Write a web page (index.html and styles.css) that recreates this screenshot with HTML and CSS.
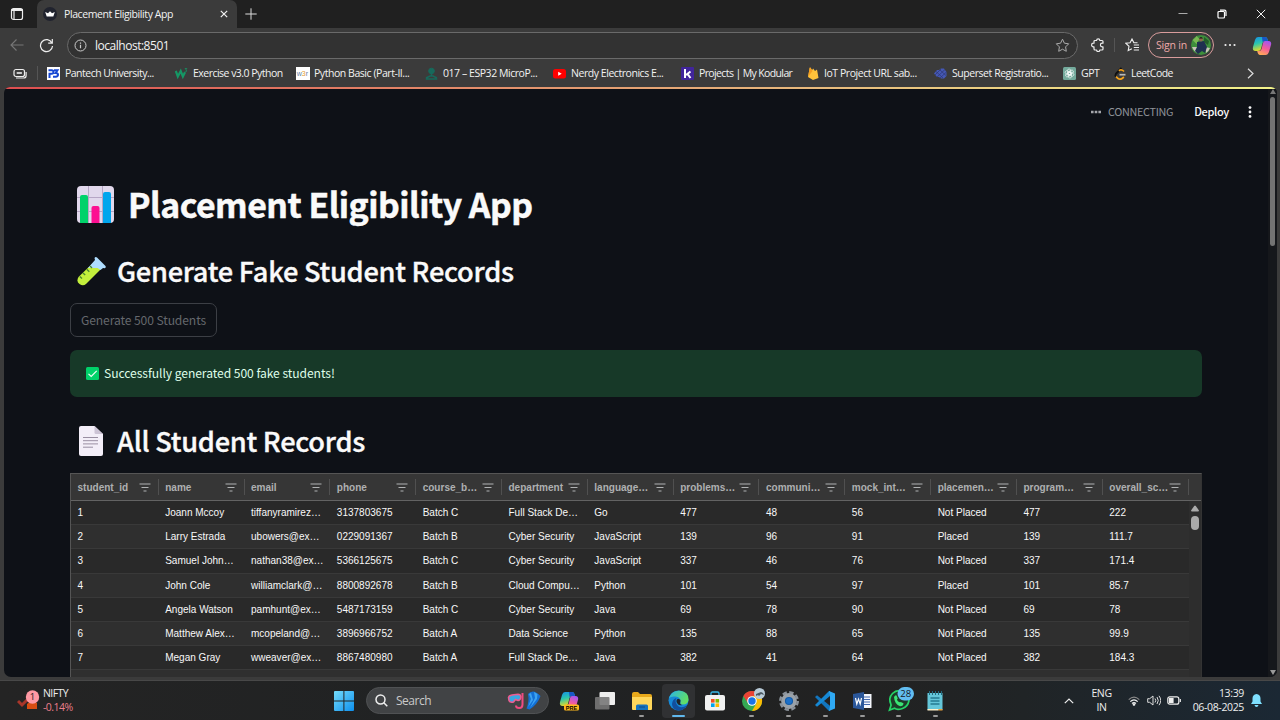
FILE: index.html
```html
<!DOCTYPE html>
<html lang="en">
<head>
<meta charset="utf-8">
<title>Placement Eligibility App</title>
<link rel="stylesheet" href="styles.css">
</head>
<body>
<div class="browser">
  <div class="tabstrip">
    <svg class="tab-actions" width="14" height="14" viewBox="0 0 14 14" fill="none" stroke="#eee" stroke-width="1.2"><rect x="1.5" y="1.5" width="11" height="11" rx="2"/><path d="M1.5 3h11" stroke-width="2"/><path d="M4 3v9"/></svg>
    <div class="tab">
      <svg width="14" height="14" viewBox="0 0 14 14"><circle cx="7" cy="7" r="7" fill="#20232e"/><path d="M2.200 5 5 6.300 7 4.200 9 6.300 11.800 5 10.300 9.500H3.700z" fill="#fff"/></svg>
      <span class="tab-title">Placement Eligibility App</span>
      <svg class="tab-close" width="8" height="8" viewBox="0 0 8 8" stroke="#f2f2f2" stroke-width="1.200"><path d="M.8.8l6.400 6.400M7.200.8.8 7.200"/></svg>
    </div>
    <svg class="new-tab" width="12" height="12" viewBox="0 0 12 12" stroke="#ddd"><path d="M6 .3v11.400M.3 6h11.400"/></svg>
    <div class="window-buttons">
      <svg width="10" height="10" viewBox="0 0 10 10" stroke="#aaa"><path d="M.5 4.500h9"/></svg>
      <svg width="10" height="10" viewBox="0 0 10 10" fill="none" stroke="#fff" stroke-width="1.200"><rect x="1" y="2.500" width="6.500" height="6.500" rx="1"/><path d="M3 1.200h4.500Q9 1.200 9 2.800V7"/></svg>
      <svg width="10" height="10" viewBox="0 0 10 10" stroke="#f2f2f2"><path d="M.8.8l8.400 8.400M9.200.8.8 9.200"/></svg>
    </div>
  </div>
  <div class="toolbar">
    <svg width="14" height="14" viewBox="0 0 14 14" fill="none" stroke="#777" stroke-width="1.100"><path d="M13.500 7H1M6.500 1.500 1 7l5.500 5.500"/></svg>
    <svg class="reload" width="15" height="15" viewBox="0 0 15 15" fill="none" stroke="#eee" stroke-width="1.200"><path d="M12.900 5A6 6 0 1 0 13.500 8M13.300 1v4.200H9.200"/></svg>
    <div class="address">
      <svg width="13" height="13" viewBox="0 0 13 13" fill="none" stroke="#ccc"><circle cx="6.500" cy="6.500" r="5.500"/><path d="M6.500 5.800v3.400M6.500 3.600v1.200" stroke-width="1.200"/></svg>
      <span class="url">localhost:8501</span>
      <svg width="15" height="15" viewBox="0 0 15 15" fill="none" stroke="#aaa"><path d="m7.500 1.200 1.900 4 4.300.6-3.100 3.100.7 4.400-3.800-2.100-3.800 2.100.7-4.400L1.300 5.800l4.300-.6z"/></svg>
    </div>
    <svg class="extensions" width="14" height="14" viewBox="0 0 14 14" fill="none" stroke="#eee" stroke-width="1.200" stroke-linejoin="round"><path d="M4 2.500h1.600a1.600 1.600 0 0 1 3.200 0H11q1 0 1 1v1.700h-.8a1.800 1.800 0 0 0 0 3.600h.8v2.200q0 1-1 1H8.800a1.600 1.600 0 0 1-3.200 0H4q-1 0-1-1V8.800h-.6a1.800 1.800 0 0 1 0-3.600H3V3.500q0-1 1-1z"/></svg>
    <span class="bar-divider"></span>
    <svg class="favorites" width="15" height="14" viewBox="0 0 15 14" fill="none" stroke="#eee" stroke-width="1.100"><path d="M12.500 4.800 8.800 4.600 7 1 5.100 4.700l-4.200.6L4 8.300l-.8 4.300 3.700-1.900M8.800 7H14M8.800 9.500H14M8.800 12H14"/></svg>
    <div class="signin"><span>Sign in</span>
      <svg width="20" height="20" viewBox="0 0 20 20"><circle cx="10" cy="10" r="10" fill="#3d8f3b"/><path d="M1.500 5q3-2 4-4l3 3-3 5z" fill="#79b853"/><path d="m13 2 5 4-1 4-4-3z" fill="#245c2a"/><path d="M1 12h5l1 6q-4-1-6-6M14 12l5 1q-1 3-4 5z" fill="#c8c5b6"/><path d="m6 7 7-1 3 6-2 6-3-2-4 3-3-3 2-4z" fill="#20304f"/><circle cx="10" cy="4.500" r="2" fill="#8f684d"/><path d="M8 3.500q2-3 4 0z" fill="#161616"/></svg>
    </div>
    <svg class="more" width="12" height="4" viewBox="0 0 12 4" fill="#eee"><circle cx="1.500" cy="2" r="1.100"/><circle cx="6" cy="2" r="1.100"/><circle cx="10.500" cy="2" r="1.100"/></svg>
    <svg class="copilot" width="20" height="19" viewBox="0 0 20 19"><use href="#copilot-mark"/></svg>
  </div>
  <div class="bookmarks">
    <svg class="workspace" width="14" height="11" viewBox="0 0 14 11" fill="none" stroke="#eee" stroke-width="1.200"><rect x="1" y="1.500" width="10.500" height="7" rx="2"/><path d="M3.700 5h5.200" stroke-width="1.600"/><path d="M3 10h7.500q2.600 0 2.600-2.600V4"/></svg>
    <span class="bar-divider"></span>
    <div class="bookmark b1"><svg width="13" height="13" viewBox="0 0 13 13"><path fill="#fff" d="M0 0h13v13H0z"/><path d="M1.500 3.200h3.200q1.800 0 1.800 1.800T4.700 6.800H2.500V11M7 3.200h3.500L8.700 6q2.300 0 2.300 1.800T8.700 9.700H6" fill="none" stroke="#1747d3" stroke-width="2"/></svg><span>Pantech University...</span></div>
    <div class="bookmark b2"><svg width="13" height="13" viewBox="0 0 13 13" fill="none" stroke="#159765"><path d="m.8 4 2 5.500L5.700 4l2.200 5.500L10 5.300" stroke-width="2.200"/><path d="M9.800 1.500h2L10.700 3q1.300.2.800 1.400-.7.800-1.700.2" stroke-width=".8"/></svg><span>Exercise v3.0 Python</span></div>
    <div class="bookmark b3"><svg width="14" height="13" viewBox="0 0 14 13"><path fill="#fff" d="M0 0h14v13H0z"/><text class="w3r" x=".8" y="9"><tspan fill="#6383a5">w</tspan><tspan fill="#e59b34">3</tspan><tspan fill="#6383a5">r</tspan></text></svg><span>Python Basic (Part-II...</span></div>
    <div class="bookmark b4"><svg width="13" height="13" viewBox="0 0 13 13" fill="none" stroke="#17695b"><circle cx="6.500" cy="4" r="2.800" fill="#17695b"/><path d="M6.500 6v3M1 11l4-2h3l4 2M.8 12h11.500" stroke-width="1.500"/></svg><span>017 – ESP32 MicroP...</span></div>
    <div class="bookmark b5"><svg width="13" height="13" viewBox="0 0 13 13"><rect y="2" width="13" height="9.500" rx="2.500" fill="#f00"/><path d="m5.200 4.800 3.500 2-3.500 2z" fill="#fff"/></svg><span>Nerdy Electronics E...</span></div>
    <div class="bookmark b6"><svg width="13" height="13" viewBox="0 0 13 13"><rect width="13" height="13" rx="1" fill="#41259b"/><path d="M4 2v9M9.500 4.500 5 8M6.500 6.800 9.500 11" stroke="#fff" stroke-width="2"/></svg><span>Projects | My Kodular</span></div>
    <div class="bookmark b7"><svg width="12" height="13" viewBox="0 0 12 13"><path d="M1 10 2.700.8q.5-.7 1 .1L5 3.300l1.100-1.800L8 4l2-1.500L11.500 11 6 13z" fill="#ffc33b"/><path d="m1 10 1.700-9.200q.5-.7 1 .1L5.500 4z" fill="#f59e22"/></svg><span>IoT Project URL sab...</span></div>
    <div class="bookmark b8"><svg width="13" height="13" viewBox="0 0 13 13"><path d="M0 6.500 3 3h2l2-1.500h3L12.500 5v4L10 11.500H7L5 10H3z" fill="#4558b4"/><path d="m1 8 6-6M3 10l8-7.500M6 11l6.500-6M2 4.500 9 11M6 3l6 5.500" stroke="#2c3770" stroke-width=".7"/></svg><span>Superset Registratio...</span></div>
    <div class="bookmark b9"><svg width="13" height="13" viewBox="0 0 13 13"><rect width="13" height="13" rx="1.500" fill="#74aa9c"/><g fill="none" stroke="#fff" stroke-width=".6"><rect x="4.500" y="2" width="3.200" height="6" rx="1.600"/><rect x="4.500" y="2" width="3.200" height="6" rx="1.600" transform="rotate(60 6.500 6.500)"/><rect x="4.500" y="2" width="3.200" height="6" rx="1.600" transform="rotate(120 6.500 6.500)"/><rect x="4.500" y="2" width="3.200" height="6" rx="1.600" transform="rotate(180 6.500 6.500)"/><rect x="4.500" y="2" width="3.200" height="6" rx="1.600" transform="rotate(240 6.500 6.500)"/><rect x="4.500" y="2" width="3.200" height="6" rx="1.600" transform="rotate(300 6.500 6.500)"/></g></svg><span>GPT</span></div>
    <div class="bookmark b10"><svg width="13" height="13" viewBox="0 0 13 13" fill="none" stroke-width="1.700"><path d="M7.500.8 1.500 7" stroke="#111"/><path d="M9.800 4.300Q7 1.800 5 4L2 7q-1.300 1.500 0 3" stroke="#111"/><path d="m2 9.700 2 1.800q2.500 1.500 4.700-.5l1.200-1M5 4l1-1q2-.8 4 1.500" stroke="#f6a31a"/><path d="M5.500 7.700h6" stroke="#bbb"/></svg><span>LeetCode</span></div>
    <svg class="overflow" width="7" height="11" viewBox="0 0 7 11" fill="none" stroke="#ddd" stroke-width="1.200"><path d="m1 .8 5 4.700-5 4.700"/></svg>
  </div>

  <div class="page">
    <div class="decoration"></div>
    <header class="app-header">
      <svg width="10" height="4" viewBox="0 0 10 4" fill="#a5a7ac"><path d="M0 .8h2.600v2.500H0zM3.700.8h2.600v2.500H3.700zM7.400.8H10v2.500H7.400z"/></svg>
      <span class="connecting">CONNECTING</span><span class="deploy">Deploy</span>
      <svg width="4" height="12" viewBox="0 0 4 12" fill="#fafafa"><circle cx="2" cy="1.600" r="1.400"/><circle cx="2" cy="6" r="1.400"/><circle cx="2" cy="10.400" r="1.400"/></svg>
    </header>
    <main>
      <h1><svg width="37" height="37" viewBox="0 0 37 37"><rect width="37" height="37" rx="4" fill="#e1d8ec"/><path d="M11.500 0v37M25.500 0v37M0 11.500h37M0 25.500h37" stroke="#b6a6c5"/><path d="M3 11q0-2 2-2h4q2 0 2 2v26H3z" fill="#00d26a"/><path d="M14.500 22q0-2 2-2h4q2 0 2 2v15h-8z" fill="#fc0f91"/><path d="M26 8q0-2 2-2h4q2 0 2 2v29h-8z" fill="#00a6ed"/></svg><span>Placement Eligibility App</span></h1>
      <h2 class="generate"><svg width="29" height="29" viewBox="0 0 29 29"><path d="m19 3 7 7L9 27q-3 2.500-6.500 0t-1-7z" fill="#c3ef3c"/><path d="m11 11 7-8-.5-2q1-1.500 2.500-.5l8.500 8.500q.8 1.500-.8 2.200L26 11l-2.500 2-3-2z" fill="#aeddff"/><path d="m13 9 2 2M9.800 12.300l2.500 2.400M6 16l2.200 2M2.800 19.500 5 21.500" stroke="#48872d" stroke-width="1.400"/></svg><span>Generate Fake Student Records</span></h2>
      <button class="generate-button" disabled>Generate 500 Students</button>
      <div class="alert"><svg width="13" height="13" viewBox="0 0 13 13"><rect width="13" height="13" rx="1.500" fill="#00d26a"/><path d="m2.500 6.800 2.700 2.700 5.500-5.700" fill="none" stroke="#eefff5" stroke-width="1.200"/></svg><span>Successfully generated 500 fake students!</span></div>
      <h2 class="records"><svg width="24" height="30" viewBox="0 0 24 30"><path d="M2 0h13.500L24 8v20q0 2-2 2H2q-2 0-2-2V2Q0 0 2 0z" fill="#f3eef8"/><path d="M15.500 0 24 8h-7q-1.500 0-1.500-1.500z" fill="#cdc4d6"/><path d="M4 11.500h15M4 14.700h15M4 17.900h15M4 21.200h10" stroke="#998ea2"/></svg><span>All Student Records</span></h2>
      <div class="grid">
        <div class="grid-head" id="grid-head"></div>
        <div class="grid-view"><div class="grid-body" id="grid-body"></div>
          <div class="grid-scroll"><svg width="8" height="7" viewBox="0 0 8 7"><path d="M3.200 1q.8-1 1.600 0L8 5.500Q8 6.500 7 6.500H1Q0 6.500 0 5.500z" fill="#aaa"/></svg><i></i></div></div>
      </div>
    </main>
    <div class="page-scroll"><svg width="6" height="5" viewBox="0 0 6 5"><path d="m0 5 3-5 3 5z" fill="#777"/></svg><i></i><svg class="down" width="6" height="5" viewBox="0 0 6 5"><path d="m0 0 3 5 3-5z" fill="#999"/></svg></div>
  </div>
</div>

<footer class="taskbar">
  <div class="widget">
    <svg width="24" height="21" viewBox="0 0 24 21"><path d="m1 11 4 4 5-5" fill="none" stroke="#a9362a" stroke-width="3"/><path d="m10 14 5-4 5 3v6H10z" fill="#d84d12"/><circle cx="15.500" cy="7" r="6.700" fill="#ff99a4"/><text class="badge-text" x="15.500" y="10.400">1</text></svg>
    <div class="ticker"><span>NIFTY</span><span class="loss">-0.14%</span></div>
  </div>
  <svg class="start" width="20" height="20" viewBox="0 0 20 20"><defs><linearGradient id="win" x2="1" y2="1"><stop stop-color="#75dcfb"/><stop offset="1" stop-color="#0d8fed"/></linearGradient></defs><path d="M0 1q0-1 1-1h8.400v9.400H0zM10.400 0H19q1 0 1 1v8.400h-9.600zM0 10.400h9.400V20H1q-1 0-1-1zM10.400 10.400H20V19q0 1-1 1h-8.600z" fill="url(#win)"/></svg>
  <div class="search"><svg width="13" height="13" viewBox="0 0 13 13" fill="none" stroke="#eee" stroke-width="1.500"><circle cx="5.500" cy="5.500" r="4.500"/><path d="m8.800 8.800 3.500 3.500"/></svg><span>Search</span>
    <svg class="snorkel" width="35" height="20" viewBox="0 0 35 20"><path d="M1.500 6.500Q2 4.500 5 4l6-.8q2.500 0 3 2.800-.5 3.500-3 3.500L8.500 8.500 6.500 11Q3 12 2 9.500z" fill="#38a8e4" stroke="#ef5c91" stroke-width="1.500"/><path d="M15.500 2v11.500q0 3.500-3.300 3.500Q9 17 9 14.500" fill="none" stroke="#ef4b80" stroke-width="2"/><path d="M21 3q2-2.500 5-2.500T33.500 5q-3 8.500-11 13.500l-3-1q3-7 1.500-14.500" fill="#1370d6"/><path d="m22 3 2 5-3 8 5-7-2-7zM27 1l1 6-5 10 7-9 .5-5z" fill="#3ea3f0"/></svg></div>
  <div class="task"><svg width="20" height="20" viewBox="0 0 20 20"><defs><linearGradient id="cp1" x2=".3" y2="1"><stop stop-color="#158ee8"/><stop offset=".5" stop-color="#2bc5ae"/><stop offset="1" stop-color="#e4da28"/></linearGradient><linearGradient id="cp2" x1=".7" y1="0" x2=".3" y2="1"><stop stop-color="#a456ef"/><stop offset=".5" stop-color="#f45b9a"/><stop offset="1" stop-color="#ffac54"/></linearGradient><g id="copilot-mark"><path d="M6 1h7q2 0 2.500 2l.5 2h-3q-2 0-2.500 2L9 13q-.5 2-3 2H3.500Q.2 15 1 11l2-7q.8-3 3-3z" fill="url(#cp1)"/><path d="M10 1h3q2 0 2.500 2l.6 2H13q-2 0-2.500 1z" fill="#1856c6"/><path d="M13 5h3.500q3.200 0 2.600 3.500l-2 7Q16 19 13.500 19H8q-2 0-2.800-4H7q2 0 2.600-2L11 7q.5-2 2-2z" fill="url(#cp2)"/></g></defs><use href="#copilot-mark"/><rect x="5" y="13.500" width="15" height="6" rx="1.500" fill="#ffb91e"/><text class="pre" x="12.500" y="18.500">PRE</text></svg></div>
  <div class="task"><svg width="20" height="18" viewBox="0 0 20 18"><rect x="4.500" y="0" width="15.500" height="13" rx="1" fill="#eee"/><rect x="0" y="5" width="14.500" height="12.500" rx="1" fill="#777" opacity=".9"/></svg></div>
  <div class="task open"><svg width="20" height="18" viewBox="0 0 20 18"><path d="M0 2q0-2 2-2h4l2 2h10q2 0 2 2v13H0z" fill="#e8a91b"/><path d="M0 5h20v12q0 1-1 1H1q-1 0-1-1z" fill="#ffd75b"/><path d="M4 18v-4q0-1.500 1.500-1.500h9Q16 12.500 16 14v4z" fill="#1673bd"/><path d="M7 15h6" stroke="#0f4c85"/></svg></div>
  <div class="task active"><svg width="21" height="21" viewBox="0 0 21 21"><defs><linearGradient id="e1" y2=".5" x2="1"><stop stop-color="#29b4e9"/><stop offset="1" stop-color="#62df64"/></linearGradient></defs><circle cx="10.500" cy="10.500" r="10" fill="#1689d8"/><path d="M1 8Q4 0 12 .7q9 1 8.500 9-.5 5-6 4.800-3-.3-2-2.500Q13 7 7.500 6.500 3 6 1 8z" fill="url(#e1)"/><path d="M8.500 8Q6 12 10 16q4 3 9-1-3 5.500-8.500 5.500Q4 19.500 4 14 4.500 9 8.500 8z" fill="#124f9e"/><path d="M10 8.700q3.300.5 2.300 3.300-.8 2.500 2.200 3-4 1-5.500-2t1-4.300z" fill="#202529"/></svg></div>
  <div class="task"><svg width="20" height="20" viewBox="0 0 20 20"><path d="M6 5V2.500Q6 1 7.500 1h5Q14 1 14 2.500V5" fill="none" stroke="#37b9e9" stroke-width="1.300"/><rect y="4" width="20" height="15.500" rx="2" fill="#f1f1f1"/><path d="M6 8h3.600v3.600H6z" fill="#f25022"/><path d="M10.500 8h3.600v3.600h-3.600z" fill="#7fba00"/><path d="M6 12.400h3.600V16H6z" fill="#00a4ef"/><path d="M10.500 12.400h3.600V16h-3.600z" fill="#ffb900"/></svg></div>
  <div class="task open"><svg width="26" height="25" viewBox="0 0 26 25"><circle cx="13" cy="13" r="10" fill="#34a853"/><path d="M4.340 8A10 10 0 0 1 21.700 8H13l-4 7z" fill="#ea4335"/><path d="M21.700 8A10 10 0 0 1 13 23l4.300-7.500Q18 11 13 8z" fill="#fbbc04"/><circle cx="13" cy="13" r="4.800" fill="#fff"/><circle cx="13" cy="13" r="3.700" fill="#1a73e8"/><circle cx="20.500" cy="5.500" r="5.500" fill="#b9cbd8"/><path d="m17 6 5-2 2 1 1 2-3-1-2 2-1-1-2 1z" fill="#4b5862"/></svg></div>
  <div class="task open"><svg width="20" height="20" viewBox="0 0 20 20"><circle cx="10" cy="10" r="8.800" fill="none" stroke="#8b929a" stroke-width="2.400" stroke-dasharray="4.400 2.510"/><circle cx="10" cy="10" r="6" fill="#145ca8" stroke="#9aa1a8" stroke-width="3.800"/><circle cx="10" cy="10" r="3" fill="#1c70c9"/></svg></div>
  <div class="task open"><svg width="20" height="20" viewBox="0 0 20 20"><path d="m0 6 2-1.700 13 10.500v5L14 20z" fill="#1275bd"/><path d="m0 14 2 1.700L15 5V0h-1z" fill="#1688d4"/><path d="m14 0 6 2.500v15L14 20l1-5V5z" fill="#2fa9f3"/></svg></div>
  <div class="task open"><svg width="19" height="18" viewBox="0 0 19 18"><path d="M9 2h9.500v14H9z" fill="#f5f7fc"/><path d="M11 5h6M11 7.500h6M11 10h6M11 12.500h6" stroke="#4267ad"/><path d="m0 2 11-2v18L0 16z" fill="#2b579a"/><path d="m2.500 6 1.300 6 1.700-5 1.700 5 1.300-6" fill="none" stroke="#fff" stroke-width="1.200"/></svg></div>
  <div class="task open"><svg class="whatsapp" width="28" height="25" viewBox="0 0 28 25"><path d="m3.500 23 1.600-5Q2 11 6.500 6.500T17 4.500t6 9q-1 6-6.500 8t-8-.3z" fill="#1d3b29" stroke="#25d366" stroke-width="1.700"/><path d="M8 10q2-3 3-.5l.7 2q-1.500 1 0 2.500 2 2 3 1l2.800 1.200q0 3-3.300 3Q8.500 17.500 8 10z" fill="#3be475"/><rect x="11.500" y="0" width="16.500" height="13.500" rx="6.750" fill="#62bdf1"/><text class="badge-text" x="19.700" y="10.200">28</text></svg></div>
  <div class="task open"><svg width="16" height="20" viewBox="0 0 16 20"><path d="M.5 2h15v17H.5z" fill="#64c6d9"/><path d="M2.500 0v4M5.500 0v4M8.500 0v4M11.500 0v4M14.500 0v4" stroke="#226b80"/><path d="M3.500 7h9M3.500 10h9M3.500 13h9" stroke="#247b91" stroke-width="1.300"/><path d="M.5 18h11v1.500H.5z" fill="#fff0c8"/><path d="M11.500 18h4v1.500h-4z" fill="#e9a13d"/></svg></div>
  <div class="tray">
    <svg class="caret" width="10" height="6" viewBox="0 0 10 6" fill="none" stroke="#eee" stroke-width="1.200"><path d="m.8 5.200 4.200-4.200 4.200 4.200"/></svg>
    <div class="lang"><span>ENG</span><span>IN</span></div>
    <svg class="wifi" width="12" height="10" viewBox="0 0 12 10" fill="none" stroke="#eee" stroke-width="1.100"><path d="M.7 3.700Q6-1.500 11.300 3.700" stroke="#888"/><path d="M2.300 5.700Q6 2 9.700 5.700M4 7.500Q6 5.700 8 7.500"/><circle cx="6" cy="8.500" r=".8" fill="#eee"/></svg>
    <svg class="sound" width="14" height="11" viewBox="0 0 14 11" fill="none" stroke="#ddd"><path d="M.7 3.700h2L6 1v9L2.700 7.300h-2zM8 3.500q1.500 2 0 4M10 2q2.500 3.500 0 7M12 .8q3.500 4.700 0 9.400"/></svg>
    <svg class="battery" width="14" height="9" viewBox="0 0 14 9" fill="none" stroke="#eee" stroke-width="1.200"><rect x=".8" y=".8" width="11" height="7.400" rx="2"/><path d="M2.500 2.500H6v4H2.500z" fill="#eee"/><path d="M13.300 3v3"/></svg>
    <div class="clock"><span>13:39</span><span>06-08-2025</span></div>
    <svg class="bell" width="11" height="13" viewBox="0 0 11 13" fill="#7fe0ff"><path d="M5.500 0Q9.500.5 9.500 4.500v3L11 10H0l1.500-2.500v-3Q1.500.5 5.500 0zM3.500 11h4q-.5 2-2 2t-2-2z"/></svg>
  </div>
</footer>
<script src="grid.js"></script>
</body>
</html>
```

FILE: styles.css
```css
* { box-sizing: border-box; }
body { margin: 0; width: 1280px; height: 720px; overflow: hidden; display: flex; flex-direction: column; background: #3b3b3b; color: #f2f2f2; font-family: "Open Sans", "Noto Sans", sans-serif; font-size: 10.5px; }
svg { flex: none; display: block; }
span { white-space: nowrap; }
.browser { height: 681px; display: flex; flex-direction: column; background: #3b3b3b; border-bottom: 1px solid #484848; }

.tabstrip { height: 28px; flex: none; display: flex; align-items: center; background: #202020; }
.tab-actions { margin: 0 20px 0 10px; }
.tab { align-self: stretch; width: 200px; margin-left: -7px; display: flex; align-items: center; background: #3b3b3b; border-radius: 7px 7px 0 0; padding: 0 9px 0 6px; }
.tab-title { margin-left: 7px; letter-spacing: -.41px; }
.tab-close { margin-left: auto; }
.new-tab { margin-left: 8px; }
.window-buttons { margin-left: auto; margin-right: 14px; display: flex; gap: 29px; }

.toolbar { height: 34px; flex: none; display: flex; align-items: center; padding-left: 10px; }
.reload { margin-left: 15px; }
.address { width: 1011px; height: 27px; margin-left: 13px; padding: 0 7px; display: flex; align-items: center; background: #323232; border: 1px solid #6a6a6a; border-radius: 14px; }
.address svg:first-child { margin-left: -1px; }
.url { margin: 0 auto 0 8px; font-size: 12px; letter-spacing: -.48px; }
.extensions { margin-left: 13px; }
.bar-divider { width: 1px; height: 14px; background: #555; }
.toolbar .bar-divider { margin-left: 9px; }
.favorites { margin-left: 10px; }
.signin { width: 66px; height: 26px; margin-left: 8px; padding-left: 7px; display: flex; align-items: center; gap: 4px; border: 1px solid #d99c9c; border-radius: 13px; color: #efa9a9; font-size: 10.500px; letter-spacing: -.2px; }
.more { margin-left: 10px; }
.copilot { margin-left: 16px; }

.bookmarks { height: 25px; flex: none; display: flex; align-items: center; padding: 0 0 3px 13px; font-size: 10.500px; letter-spacing: -.45px; }
.bookmarks > .bar-divider { margin: 0 9px 0 10px; }
.bookmark { display: flex; align-items: center; gap: 5px; flex: none; }
.b1 { width: 128px; letter-spacing: -.52px; } .b2 { width: 121px; letter-spacing: -.52px; } .b3 { width: 129px; } .b4 { width: 128px; } .b5 { width: 128px; }
.b6 { width: 126px; letter-spacing: -.62px; } .b7 { width: 127px; } .b8 { width: 129px; } .b9 { width: 51px; } .b10 { width: 131px; letter-spacing: -.55px; }
.b3, .b10 { gap: 4px; }
.w3r { font: 7px "Liberation Sans", sans-serif; letter-spacing: 0; }
.overflow { margin-left: 2px; }

.page { width: 1273px; height: 590px; margin-left: 4px; position: relative; overflow: hidden; display: flex; flex-direction: column; background: #0e1117; border-radius: 6px 6px 7px 7px; font-family: "Noto Sans CJK SC", sans-serif; }
.decoration { height: 2px; flex: none; background: linear-gradient(90deg, #dd4e50, #e7b47b 60%, #f3f48b); }
.app-header { height: 46px; flex: none; padding-right: 25px; display: flex; align-items: center; justify-content: flex-end; color: #fafafa; }
.connecting { margin: -2px 21px 0 7px; color: #8f9299; font-size: 10.800px; letter-spacing: -.27px; }
.deploy { margin: -2px 19px 0 0; font-size: 11px; font-weight: 500; letter-spacing: -.35px; }
main { width: 1131.500px; margin-left: 66px; flex: none; }
h1, h2 { margin: 0; display: flex; align-items: center; color: #fafafa; white-space: nowrap; }
h1 span, .records span { position: relative; top: -1px; }
.generate span { position: relative; top: -1px; }
h1 { height: 37px; margin-top: 51px; padding-left: 7px; gap: 14px; font-size: 33.800px; line-height: 37px; font-weight: 700; letter-spacing: -.5px; -webkit-text-stroke: .5px #fafafa; }
h2 { font-size: 27.200px; line-height: 30px; font-weight: 500; letter-spacing: -.26px; -webkit-text-stroke: .35px #fafafa; }
.generate { height: 30px; margin-top: 33px; padding-left: 7px; gap: 11px; }
.generate-button { display: block; width: 147px; height: 34px; margin: 17px 0 13px; padding: 0 0 2px; background: none; border: 1px solid #3c3f45; border-radius: 7px; color: #65686d; font: 12.100px "Noto Sans CJK SC", sans-serif; letter-spacing: -.1px; }
.alert { height: 47px; padding: 0 0 1px 16px; display: flex; align-items: center; gap: 5px; background: #173928; border-radius: 7px; color: #dffde9; font-size: 12.100px; letter-spacing: -.06px; }
.alert span { margin-top: -1px; }
.records { height: 30px; margin-top: 29px; padding-left: 9px; gap: 14px; }

.grid { height: 220px; margin-top: 17px; border: 1px solid #555; border-right-color: #333; color: #f8f8f8; background: #2c2c2c; font: 10.030px "Liberation Sans", Arial, sans-serif; }
.grid-head, .row { display: grid; grid-template-columns: 87.700px repeat(12, 85.830px); }
.grid-head { height: 27px; background: #363636; border-bottom: 1px solid #636363; font-weight: 700; color: #aeb0b1; }
.head-cell { display: flex; align-items: center; justify-content: space-between; padding: 1px 7px 0 6.500px; border-right: 1px solid #505050; height: 16px; align-self: center; }
.grid-view { display: flex; }
.grid-body { width: 1118px; background: #292929; }
.row { height: 24.200px; line-height: 23.400px; border-bottom: 1px solid #393939; }
.row:nth-child(even) { background: #2f2f2f; }
.cell { padding-left: 6.500px; white-space: nowrap; }
.grid-scroll { flex: 1; padding-top: 4px; display: flex; flex-direction: column; align-items: center; gap: 4px; background: #2d2d2d; }
.grid-scroll i { width: 8px; height: 14px; background: #aaa; border-radius: 4px; }
.page-scroll { position: absolute; right: 0; top: 2px; width: 9px; height: 588px; display: flex; flex-direction: column; align-items: center; background: #15171b; padding: 0 0 2px; gap: 3px; }
.page-scroll i { width: 5px; height: 149px; background: #737373; border-radius: 3px; }
.page-scroll .down { margin-top: auto; }

.taskbar { height: 39px; flex: none; display: flex; align-items: center; background: linear-gradient(90deg, #242424, #202223 40%, #222222 68%, #202426 80%, #1b2834); color: #eee; }
.widget { width: 334px; padding-left: 17px; display: flex; align-items: center; gap: 2px; flex: none; }
.ticker, .clock, .lang { display: flex; flex-direction: column; line-height: 13.500px; letter-spacing: -.35px; font-size: 10.500px; }
.ticker { letter-spacing: -.55px; }
.loss { color: #eb7f8b; }
.badge-text { font: 9.500px "Open Sans", sans-serif; fill: #17191b; text-anchor: middle; }
.search { width: 183px; height: 27px; margin: 0 3px 0 12px; padding: 0 6px 0 8px; display: flex; align-items: center; background: #414345; border: 1px solid #505254; border-radius: 14px; color: #c9c9c9; font-size: 12px; letter-spacing: -.5px; flex: none; }
.search span { margin-left: 8px; }
.snorkel { margin-left: auto; }
.task { position: relative; width: 33px; height: 34px; margin-right: 3.700px; display: flex; align-items: center; justify-content: center; border-radius: 4px; flex: none; }
.active { background: #303133; }
.open::after, .active::after { content: ""; position: absolute; left: 14px; bottom: 1px; width: 5px; height: 2px; border-radius: 1px; background: #999; }
.active::after { left: 10px; width: 13px; background: #60b8ed; }
.whatsapp { position: relative; left: 1px; top: -1px; }
.pre { font: 700 5.500px "Liberation Sans", sans-serif; text-anchor: middle; }
.tray { margin-left: auto; padding-right: 18px; display: flex; align-items: center; }
.lang { align-items: center; margin: 0 16px 0 17px; }
.sound { margin: 0 6px 0 7px; }
.clock { align-items: flex-end; margin: 0 7px 0 12px; }
```

FILE: grid.js
```js
const columns = ["student_id", "name", "email", "phone", "course_b…", "department", "language…", "problems…", "communi…", "mock_int…", "placemen…", "program…", "overall_sc…"];
const students = [
  [1, "Joann Mccoy", "tiffanyramirez…", "3137803675", "Batch C", "Full Stack De…", "Go", 477, 48, 56, "Not Placed", 477, 222],
  [2, "Larry Estrada", "ubowers@ex…", "0229091367", "Batch B", "Cyber Security", "JavaScript", 139, 96, 91, "Placed", 139, 111.7],
  [3, "Samuel John…", "nathan38@ex…", "5366125675", "Batch C", "Cyber Security", "JavaScript", 337, 46, 76, "Not Placed", 337, 171.4],
  [4, "John Cole", "williamclark@…", "8800892678", "Batch B", "Cloud Compu…", "Python", 101, 54, 97, "Placed", 101, 85.7],
  [5, "Angela Watson", "pamhunt@ex…", "5487173159", "Batch C", "Cyber Security", "Java", 69, 78, 90, "Not Placed", 69, 78],
  [6, "Matthew Alex…", "mcopeland@…", "3896966752", "Batch A", "Data Science", "Python", 135, 88, 65, "Not Placed", 135, 99.9],
  [7, "Megan Gray", "wweaver@ex…", "8867480980", "Batch A", "Full Stack De…", "Java", 382, 41, 64, "Not Placed", 382, 184.3],
  Array(13).fill("")
];
const filterIcon = '<svg width="12" height="9" viewBox="0 0 12 9" stroke="#b0b2b3" stroke-width="1.1"><path d="M.5 1h11M2.5 4.500h7M4.500 8h3"/></svg>';
document.getElementById("grid-head").innerHTML = columns.map(c => `<div class="head-cell"><span>${c}</span>${filterIcon}</div>`).join("");
document.getElementById("grid-body").innerHTML = students.map(r => `<div class="row">${r.map(v => `<div class="cell">${v}</div>`).join("")}</div>`).join("");
```
